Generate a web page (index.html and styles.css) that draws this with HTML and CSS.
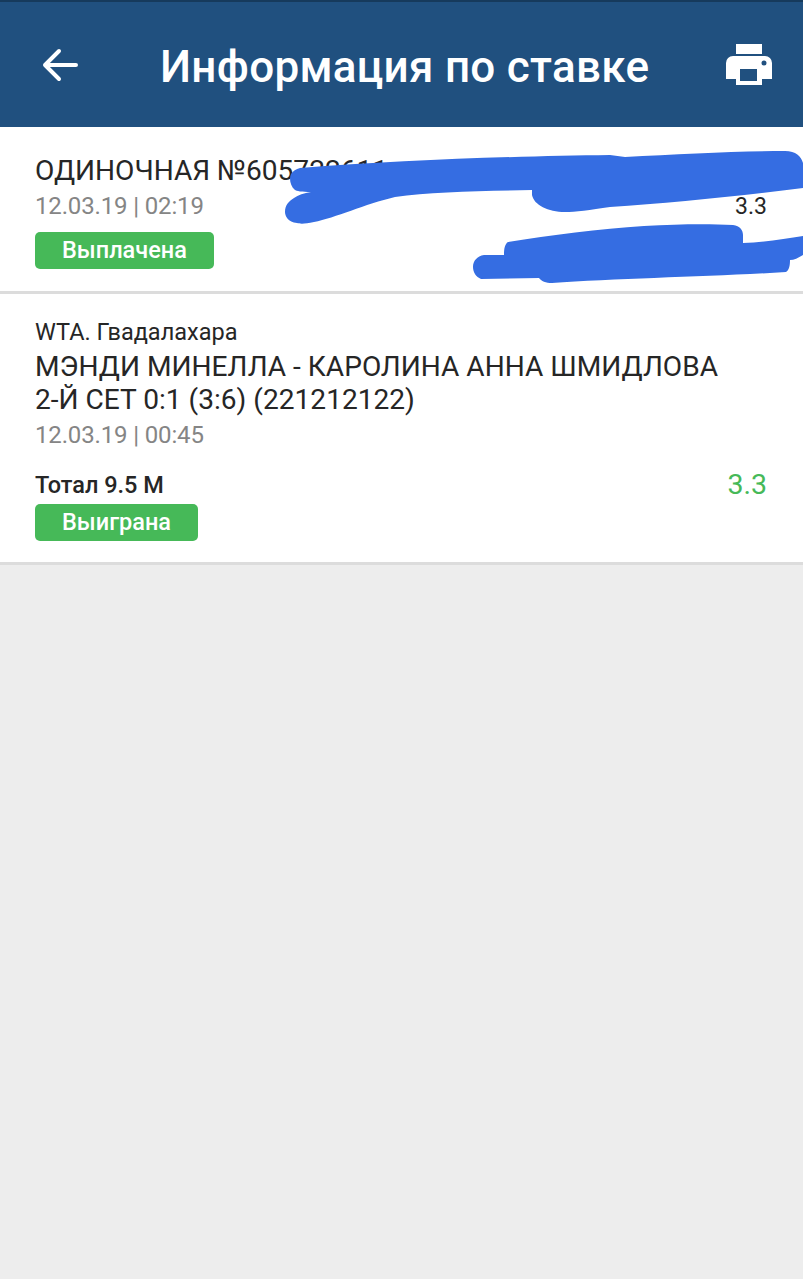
FILE: index.html
```html
<!DOCTYPE html>
<html lang="ru">
<head>
    <meta charset="UTF-8">
    <meta name="viewport" content="width=device-width, initial-scale=1.0">
    <title>Информация по ставке</title>
    <link rel="stylesheet" href="styles.css">
</head>
<body>
    <header class="app-bar">
        <svg class="back-icon" viewBox="0 0 40 40" width="40" height="40">
            <path d="M35 20H4M18 6L4 20l14 14" fill="none" stroke="#fff" stroke-width="4" stroke-linecap="round" stroke-linejoin="round"/>
        </svg>
        <h1>Информация по ставке</h1>
        <svg class="print-icon" viewBox="0 0 46 41" width="46" height="41">
            <path fill="#fff" fill-rule="evenodd" d="M10 0h26v10H10zM7 12h32a7 7 0 0 1 7 7v16H36v6H10v-6H0V19a7 7 0 0 1 7-7zM14 25v12h17V25zM38 16.500a2.500 2.500 0 1 0 0 5 2.500 2.500 0 0 0 0-5z"/>
        </svg>
    </header>

    <section class="card summary">
        <div class="title">ОДИНОЧНАЯ №605722611</div>
        <div class="row date-row">
            <span class="date">12.03.19 | 02:19</span>
            <span class="odds">3.3</span>
        </div>
        <span class="badge">Выплачена</span>
    </section>

    <section class="card event">
        <div class="league">WTA. Гвадалахара</div>
        <div class="title">МЭНДИ МИНЕЛЛА - КАРОЛИНА АННА ШМИДЛОВА<br>2-Й СЕТ 0:1 (3:6) (221212122)</div>
        <div class="date">12.03.19 | 00:45</div>
        <div class="row bet-row">
            <div class="bet-name">Тотал 9.5 М</div>
            <div class="odds-win">3.3</div>
        </div>
        <span class="badge">Выиграна</span>
    </section>

    <!-- scribbles drawn over the screenshot -->
    <svg class="scribble" viewBox="0 0 803 300" width="803" height="300">
        <path fill="#356de2" d="M300 168C400 160 520 156 610 155L625 157C680 154 740 151 785 151C796 151 801 156 803 163V188C740 196 670 203 610 207C590 210 575 212 565 212C548 212 534 205 532 195V190C480 191 430 192 395 197C365 204 335 218 314 222C305 224 300 224 297 223C288 222 285 216 285 212C285 205 289 201 294 198C298 195 304 193 311 192C302 192 296 191 295 190C290 186 289 178 291 174C293 171 296 169 300 168Z"/>
        <path fill="#356de2" d="M484 255H504C504 248 505 244 508 242C550 235 600 229 644 226C680 224 710 224 733 225C740 226 743 230 743 235V243C765 242 785 239 803 236V255C798 258 794 260 790 260C790 266 789 270 786 272C740 275 700 276 654 278C620 279 580 281 552 283C546 283 541 281 539 278C520 278 500 279 481 279C476 277 473 272 473 267C473 261 477 256 484 255Z"/>
    </svg>
</body>
</html>
```

FILE: styles.css
```css
* {
    margin: 0;
    padding: 0;
    box-sizing: border-box;
}

body {
    position: relative;
    min-height: 100vh;
    background: #ededed;
    font-family: Roboto, 'Liberation Sans', sans-serif;
    color: #262626;
    overflow: hidden;
}

.app-bar {
    display: flex;
    align-items: center;
    height: 127px;
    padding: 0 31px 0 41px;
    background: #20507f;
    border-top: 2px solid #163a5c;
}

.app-bar h1 {
    margin: 4px 0 0 79px;
    color: #fff;
    font-size: 44px;
    font-weight: 500;
    letter-spacing: 0.3px;
    white-space: nowrap;
}

.print-icon {
    margin-left: auto;
}

.card {
    display: flex;
    flex-direction: column;
    align-items: flex-start;
    background: #fff;
    padding: 0 36px 0 35px;
    border-bottom: 3px solid #dcdcdc;
}

.summary {
    height: 167px;
    padding-top: 27px;
}

.event {
    height: 271px;
    padding-top: 24px;
}

.row {
    display: flex;
    justify-content: space-between;
    width: 100%;
}

.title {
    font-size: 28.1px;
    line-height: 33px;
}

.date {
    color: #858585;
    font-size: 24px;
    letter-spacing: -0.15px;
    line-height: 30px;
}

.date-row {
    align-items: center;
    margin-top: 4px;
}

.odds {
    font-size: 23px;
}

.badge {
    padding: 0 27px;
    margin-top: 11px;
    border-radius: 5px;
    background: #46b958;
    color: #fff;
    font-size: 23.5px;
    font-weight: 500;
    line-height: 37px;
}

.league {
    font-size: 23.5px;
    line-height: 28px;
    margin-bottom: 4px;
}

.event .date {
    margin-top: 4px;
}

.bet-row {
    align-items: center;
    margin-top: 18px;
}

.bet-name {
    font-size: 23.5px;
    font-weight: 500;
    line-height: 32px;
}

.odds-win {
    color: #46b958;
    font-size: 28.5px;
}

.event .badge {
    margin-top: 3px;
}

.scribble {
    position: absolute;
    top: 0;
    left: 0;
}
```
